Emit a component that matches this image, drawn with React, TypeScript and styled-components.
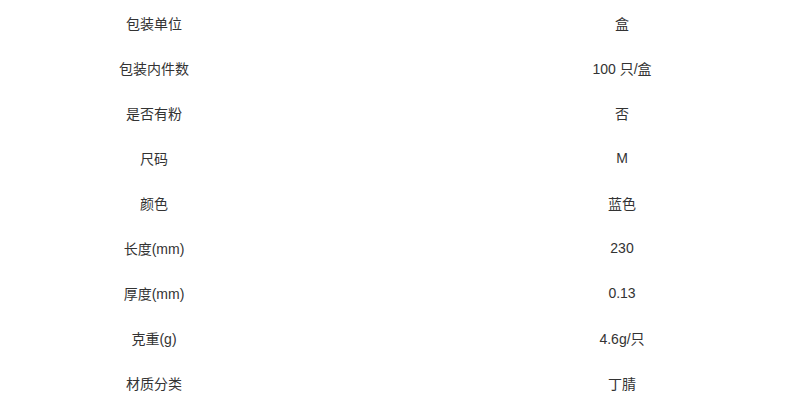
import React from 'react';
import styled, { createGlobalStyle } from 'styled-components';

const GlobalStyle = createGlobalStyle`
    html, body {
        margin: 0;
        padding: 0;
        background: #fff;
        overflow: hidden;
    }
`;

const Frame = styled.div`
    width: 800px;
    overflow: hidden;
`;

const Table = styled.div`
    display: grid;
    grid-template-columns: 308px 628px;
    width: 936px;
    font-family: 'Liberation Sans', 'Noto Sans CJK SC', sans-serif;
    font-size: 14px;
    color: #333;
`;

const Cell = styled.div`
    height: 45px;
    display: flex;
    align-items: center;
    justify-content: center;
    white-space: nowrap;
`;

const specs: [string, string][] = [
    ['包装单位', '盒'],
    ['包装内件数', '100 只/盒'],
    ['是否有粉', '否'],
    ['尺码', 'M'],
    ['颜色', '蓝色'],
    ['长度(mm)', '230'],
    ['厚度(mm)', '0.13'],
    ['克重(g)', '4.6g/只'],
    ['材质分类', '丁腈'],
];

const App: React.FC = () => (
    <>
        <GlobalStyle />
        <Frame>
            <Table>
                {specs.map(([label, value]) => (
                    <React.Fragment key={label}>
                        <Cell>{label}</Cell>
                        <Cell>{value}</Cell>
                    </React.Fragment>
                ))}
            </Table>
        </Frame>
    </>
);

export default App;
